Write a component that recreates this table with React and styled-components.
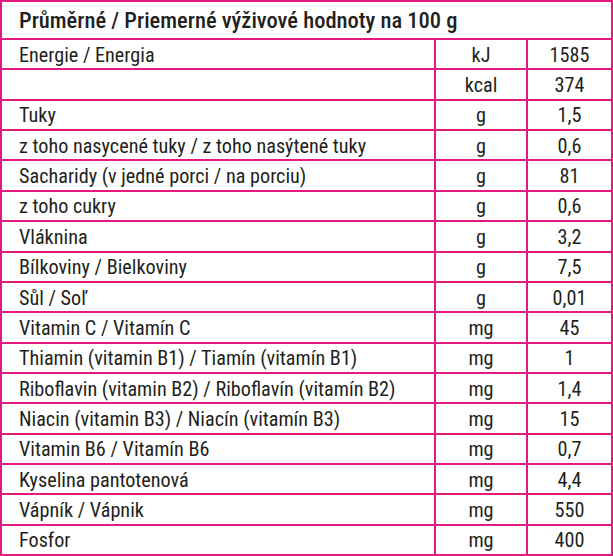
import React from "react";
import styled, { createGlobalStyle } from "styled-components";

const PINK = "#e5197f";

const GlobalStyle = createGlobalStyle`
  html, body { margin: 0; padding: 0; background: #fff; }
  * { box-sizing: border-box; }
`;

const Table = styled.div`
  width: 613px;
  height: 556px;
  border: 2px solid ${PINK};
  display: flex;
  flex-direction: column;
  font-family: "Roboto Condensed", "Roboto", sans-serif;
  font-stretch: condensed;
  color: #231f20;
`;

const Header = styled.div`
  height: 36px;
  flex: none;
  display: flex;
  align-items: center;
  padding: 0 0 1px 17px;
  font-size: 22.5px;
  font-weight: 500;
`;

const Row = styled.div`
  flex: 1;
  display: grid;
  grid-template-columns: 432px 92px 1fr;
  border-top: 2px solid ${PINK};
`;

const Cell = styled.div`
  display: flex;
  align-items: center;
  font-size: 20.2px;
  padding-top: 1px;
  white-space: nowrap;
  justify-content: ${(p) => (p.center ? "center" : "flex-start")};
  padding-left: ${(p) => (p.center ? "0" : "17px")};
  border-left: ${(p) => (p.center ? `2px solid ${PINK}` : "none")};
`;

const rows = [
  ["Energie / Energia", "kJ", "1585"],
  ["", "kcal", "374"],
  ["Tuky", "g", "1,5"],
  ["z toho nasycené tuky / z toho nasýtené tuky", "g", "0,6"],
  ["Sacharidy (v jedné porci / na porciu)", "g", "81"],
  ["z toho cukry", "g", "0,6"],
  ["Vláknina", "g", "3,2"],
  ["Bílkoviny / Bielkoviny", "g", "7,5"],
  ["Sůl / Soľ", "g", "0,01"],
  ["Vitamin C / Vitamín C", "mg", "45"],
  ["Thiamin (vitamin B1) / Tiamín (vitamín B1)", "mg", "1"],
  ["Riboflavin (vitamin B2) / Riboflavín (vitamín B2)", "mg", "1,4"],
  ["Niacin (vitamin B3) / Niacín (vitamín B3)", "mg", "15"],
  ["Vitamin B6 / Vitamín B6", "mg", "0,7"],
  ["Kyselina pantotenová", "mg", "4,4"],
  ["Vápník / Vápnik", "mg", "550"],
  ["Fosfor", "mg", "400"],
];

export default function App() {
  return (
    <>
      <GlobalStyle />
      <Table>
        <Header>Průměrné / Priemerné výživové hodnoty na 100 g</Header>
        {rows.map(([name, unit, value], i) => (
          <Row key={i}>
            <Cell>{name}</Cell>
            <Cell center>{unit}</Cell>
            <Cell center>{value}</Cell>
          </Row>
        ))}
      </Table>
    </>
  );
}
